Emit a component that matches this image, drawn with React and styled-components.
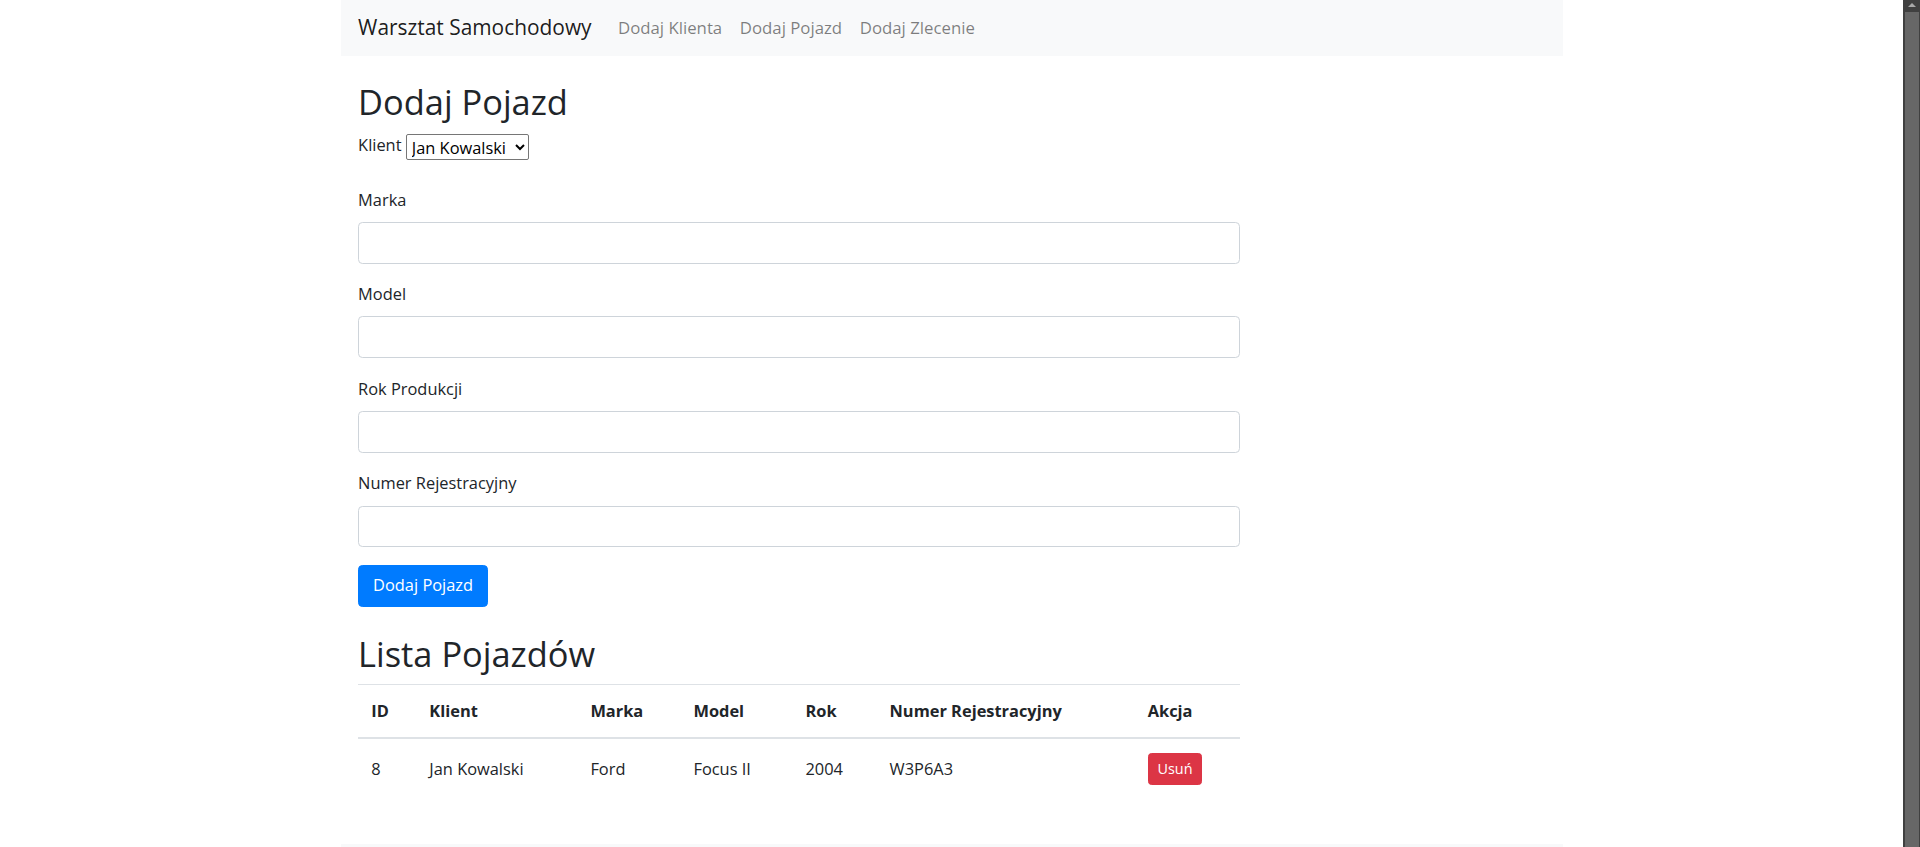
import React from "react";
import styled, { createGlobalStyle } from "styled-components";

const GlobalStyle = createGlobalStyle`
    html {
        scrollbar-width: none;
    }
    body {
        margin: 0;
        font-family: "Open Sans", "Noto Sans", sans-serif;
        font-size: 16.4px;
        line-height: 1.5;
        color: #212529;
        background: #ffffff;
    }
`;

const vehicles = [
    { id: 8, client: "Jan Kowalski", brand: "Ford", model: "Focus II", year: 2004, plate: "W3P6A3" }
];

const columns = [
    { label: "ID", width: 58 },
    { label: "Klient", width: 161 },
    { label: "Marka", width: 103 },
    { label: "Model", width: 112 },
    { label: "Rok", width: 84 },
    { label: "Numer Rejestracyjny", width: 258 },
    { label: "Akcja", width: 105 }
];

const fields = ["Marka", "Model", "Rok Produkcji", "Numer Rejestracyjny"];

export default function App() {
    return (
        <>
            <GlobalStyle />
            <Shell>
                <Viewport>
                    <Page>
                        <Navbar>
                            <Brand href="#">Warsztat Samochodowy</Brand>
                            <NavLink href="#">Dodaj Klienta</NavLink>
                            <NavLink href="#">Dodaj Pojazd</NavLink>
                            <NavLink href="#">Dodaj Zlecenie</NavLink>
                        </Navbar>
                        <Main>
                            <Heading>Dodaj Pojazd</Heading>
                            <ClientRow>
                                Klient{" "}
                                <Select defaultValue="1">
                                    <option value="1">Jan Kowalski</option>
                                </Select>
                            </ClientRow>
                            <form onSubmit={e => e.preventDefault()}>
                                {fields.map(f => (
                                    <FormGroup key={f}>
                                        <Label>{f}</Label>
                                        <Input type="text" />
                                    </FormGroup>
                                ))}
                                <PrimaryButton type="submit">Dodaj Pojazd</PrimaryButton>
                            </form>
                            <Heading $top={26}>Lista Pojazdów</Heading>
                            <Table>
                                <thead>
                                    <tr>
                                        {columns.map(c => (
                                            <Th key={c.label} $width={c.width}>{c.label}</Th>
                                        ))}
                                    </tr>
                                </thead>
                                <tbody>
                                    {vehicles.map(v => (
                                        <tr key={v.id}>
                                            <Td>{v.id}</Td>
                                            <Td>{v.client}</Td>
                                            <Td>{v.brand}</Td>
                                            <Td>{v.model}</Td>
                                            <Td>{v.year}</Td>
                                            <Td>{v.plate}</Td>
                                            <Td>
                                                <DangerButton>Usuń</DangerButton>
                                            </Td>
                                        </tr>
                                    ))}
                                </tbody>
                            </Table>
                        </Main>
                        <Footer />
                    </Page>
                </Viewport>
                <Scrollbar>
                    <ScrollArrow />
                    <ScrollThumb />
                </Scrollbar>
            </Shell>
        </>
    );
}

const Shell = styled.div`
    display: flex;
    min-height: 100vh;
`;

const Viewport = styled.div`
    flex: 1;
    min-width: 0;
`;

const Scrollbar = styled.div`
    position: sticky;
    top: 0;
    flex-shrink: 0;
    display: flex;
    flex-direction: column;
    width: 17px;
    height: 100vh;
    background-color: #404040;
`;

const ScrollArrow = styled.div`
    display: flex;
    justify-content: center;
    align-items: center;
    height: 12px;
    &::before {
        content: "";
        border-left: 4px solid transparent;
        border-right: 4px solid transparent;
        border-bottom: 4px solid #a8a8a8;
        margin-top: -3px;
    }
`;

const ScrollThumb = styled.div`
    flex: 1;
    margin: 0 1px 0 2px;
    background-color: #676767;
`;

const Page = styled.div`
    width: 1222px;
    margin: 0 auto;
`;

const Navbar = styled.nav`
    display: flex;
    align-items: center;
    height: 56px;
    padding: 0 17.6px;
    background-color: #f8f9fa;
`;

const Brand = styled.a`
    font-size: 20.9px;
    color: rgba(0, 0, 0, 0.9);
    text-decoration: none;
    margin-right: 17.6px;
`;

const NavLink = styled.a`
    font-size: 16.8px;
    padding: 0 8.8px;
    color: rgba(0, 0, 0, 0.5);
    text-decoration: none;
`;

const Main = styled.main`
    width: 881.5px;
    padding: 0 17.6px;
`;

const Heading = styled.h2`
    font-size: 34.4px;
    font-weight: 500;
    line-height: 42.2px;
    margin: ${props => props.$top || 25}px 0 8.8px;
`;

const ClientRow = styled.div`
    line-height: 26.4px;
    margin-bottom: 27px;
`;

const Select = styled.select`
    font: inherit;
    width: 123px;
    height: 26px;
    padding: 0 1px;
    border: 1px solid #767676;
    border-radius: 2px;
    color: #000000;
    background: #ffffff;
    vertical-align: middle;
`;

const FormGroup = styled.div`
    margin-bottom: 17.6px;
`;

const Label = styled.label`
    display: block;
    line-height: 26.4px;
    margin-bottom: 8.8px;
`;

const Input = styled.input`
    display: block;
    box-sizing: border-box;
    width: 100%;
    height: 41.8px;
    padding: 6.6px 13.2px;
    font: inherit;
    color: #495057;
    border: 1px solid #ced4da;
    border-radius: 4.4px;
    background: #ffffff;
`;

const PrimaryButton = styled.button`
    box-sizing: border-box;
    height: 41.6px;
    padding: 0 14px;
    font: inherit;
    color: #ffffff;
    background-color: #007bff;
    border: 1px solid #007bff;
    border-radius: 4.4px;
    cursor: pointer;
`;

const Table = styled.table`
    width: 881.5px;
    table-layout: fixed;
    border-collapse: collapse;
    margin-bottom: 17.6px;
`;

const Th = styled.th`
    box-sizing: border-box;
    width: ${props => props.$width}px;
    padding: 13.2px;
    text-align: left;
    font-weight: 700;
    line-height: 26.4px;
    border-top: 1px solid #dee2e6;
    border-bottom: 2px solid #dee2e6;
`;

const Td = styled.td`
    padding: 13.2px;
    line-height: 26.4px;
    border-top: 1px solid #dee2e6;
`;

const DangerButton = styled.button`
    padding: 4.4px 8.8px;
    font-family: inherit;
    font-size: 14.4px;
    line-height: 1.5;
    color: #ffffff;
    background-color: #dc3545;
    border: 1px solid #dc3545;
    border-radius: 3.5px;
    cursor: pointer;
`;

const Footer = styled.footer`
    height: 14px;
    margin-top: 45.5px;
    background-color: #f8f9fa;
`;
